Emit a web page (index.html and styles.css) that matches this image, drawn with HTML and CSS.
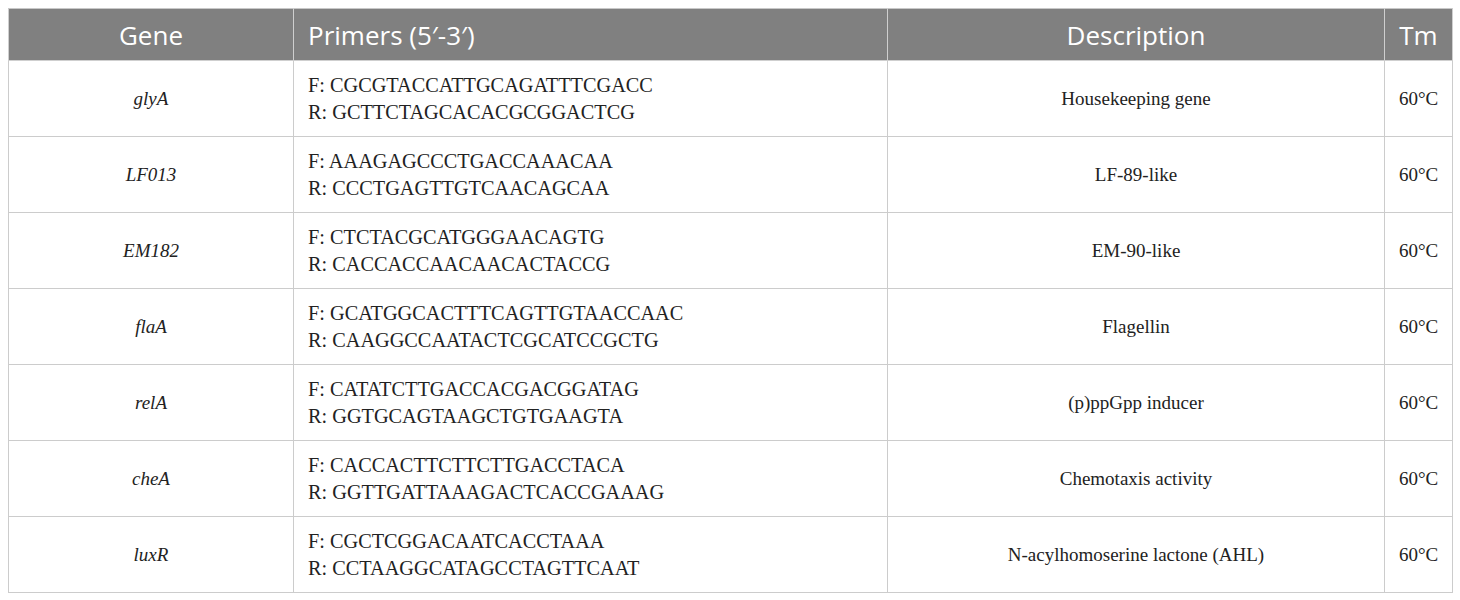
FILE: index.html
```html
<!DOCTYPE html>
<html>
<head>
<meta charset="utf-8">
<link rel="stylesheet" href="styles.css">
</head>
<body>
<table class="tbl">
  <colgroup>
    <col class="c-gene"><col class="c-primer"><col class="c-desc"><col class="c-tm">
  </colgroup>
  <thead>
    <tr>
      <th class="center">Gene</th>
      <th class="left">Primers (5′-3′)</th>
      <th class="center">Description</th>
      <th class="center">Tm</th>
    </tr>
  </thead>
  <tbody>
    <tr><td class="center gene">glyA</td><td class="left primer">F: CGCGTACCATTGCAGATTTCGACC<br>R: GCTTCTAGCACACGCGGACTCG</td><td class="center">Housekeeping gene</td><td class="center">60°C</td></tr>
    <tr><td class="center gene">LF013</td><td class="left primer">F: AAAGAGCCCTGACCAAACAA<br>R: CCCTGAGTTGTCAACAGCAA</td><td class="center">LF-89-like</td><td class="center">60°C</td></tr>
    <tr><td class="center gene">EM182</td><td class="left primer">F: CTCTACGCATGGGAACAGTG<br>R: CACCACCAACAACACTACCG</td><td class="center">EM-90-like</td><td class="center">60°C</td></tr>
    <tr><td class="center gene">flaA</td><td class="left primer">F: GCATGGCACTTTCAGTTGTAACCAAC<br>R: CAAGGCCAATACTCGCATCCGCTG</td><td class="center">Flagellin</td><td class="center">60°C</td></tr>
    <tr><td class="center gene">relA</td><td class="left primer">F: CATATCTTGACCACGACGGATAG<br>R: GGTGCAGTAAGCTGTGAAGTA</td><td class="center">(p)ppGpp inducer</td><td class="center">60°C</td></tr>
    <tr><td class="center gene">cheA</td><td class="left primer">F: CACCACTTCTTCTTGACCTACA<br>R: GGTTGATTAAAGACTCACCGAAAG</td><td class="center">Chemotaxis activity</td><td class="center">60°C</td></tr>
    <tr><td class="center gene">luxR</td><td class="left primer">F: CGCTCGGACAATCACCTAAA<br>R: CCTAAGGCATAGCCTAGTTCAAT</td><td class="center">N-acylhomoserine lactone (AHL)</td><td class="center">60°C</td></tr>
  </tbody>
</table>
</body>
</html>
```
FILE: styles.css
```css
html, body {
  margin: 0;
  padding: 0;
  background: #ffffff;
}
body {
  padding: 8px;
}
.tbl {
  border-collapse: collapse;
  width: 1445px;
  table-layout: fixed;
  font-family: "Liberation Serif", "Times New Roman", serif;
  font-size: 19px;
  color: #222;
}
.c-gene { width: 285px; }
.c-primer { width: 594px; }
.c-desc { width: 497px; }
.c-tm { width: 68px; }
.tbl th {
  background: #808080;
  color: #ffffff;
  font-family: "Open Sans", "Noto Sans", sans-serif;
  font-weight: 400;
  font-size: 26px;
  height: 52px;
  padding: 0 14px;
  border: 1px solid #cfcfcf;
  border-top-color: #c8c8c8;
  box-sizing: border-box;
  white-space: nowrap;
}
.tbl thead th + th {
  border-left: 1px solid #a8a8a8;
}
.tbl td {
  height: 76px;
  padding: 0 14px;
  border: 1px solid #cccccc;
  box-sizing: border-box;
  line-height: 27px;
  vertical-align: middle;
  white-space: nowrap;
}
.tbl td.primer {
  font-size: 20.3px;
}
.center { text-align: center; }
.left { text-align: left; }
.gene { font-style: italic; }
```
